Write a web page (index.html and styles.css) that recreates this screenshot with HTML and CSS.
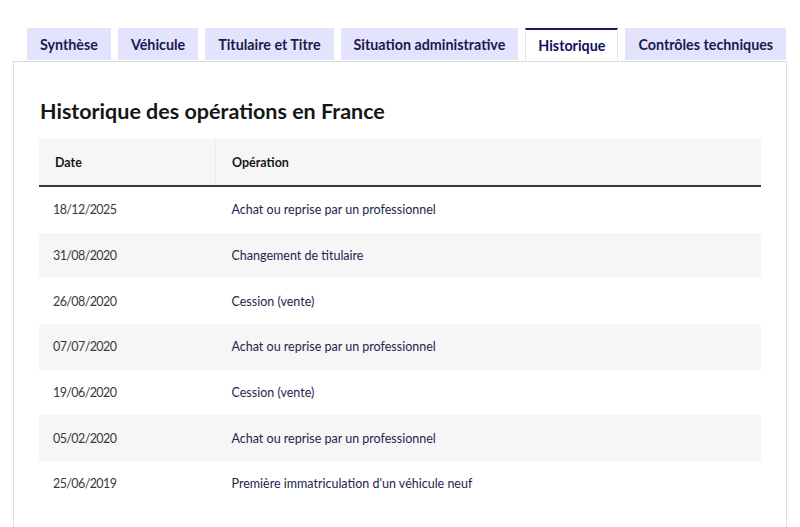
FILE: index.html
```html
<!DOCTYPE html>
<html lang="fr">
<head>
<meta charset="UTF-8">
<title>Historique du véhicule</title>
<meta name="viewport" content="width=device-width, initial-scale=1.0">
<link rel="stylesheet" href="styles.css">
</head>
<body>
<div class="tabs">
<ul class="tabs-list">
<li><button class="tab">Synthèse</button></li>
<li><button class="tab">Véhicule</button></li>
<li><button class="tab">Titulaire et Titre</button></li>
<li><button class="tab">Situation administrative</button></li>
<li><button class="tab tab-active">Historique</button></li>
<li><button class="tab">Contrôles techniques</button></li>
</ul>
<div class="panel">
<h2>Historique des opérations en France</h2>
<table class="history">
<thead>
<tr><th class="col-date">Date</th><th>Opération</th></tr>
</thead>
<tbody>
<tr><td class="col-date">18/12/2025</td><td class="op">Achat ou reprise par un professionnel</td></tr>
<tr><td class="col-date">31/08/2020</td><td class="op">Changement de titulaire</td></tr>
<tr><td class="col-date">26/08/2020</td><td class="op">Cession (vente)</td></tr>
<tr><td class="col-date">07/07/2020</td><td class="op">Achat ou reprise par un professionnel</td></tr>
<tr><td class="col-date">19/06/2020</td><td class="op">Cession (vente)</td></tr>
<tr><td class="col-date">05/02/2020</td><td class="op">Achat ou reprise par un professionnel</td></tr>
<tr><td class="col-date">25/06/2019</td><td class="op">Première immatriculation d'un véhicule neuf</td></tr>
</tbody>
</table>
</div>
</div>
</body>
</html>
```

FILE: styles.css
```css
body {
font-family: Lato, "Noto Sans", sans-serif;
margin: 0;
padding: 28px 13px 0;
background: #fff;
color: #161616;
}

.tabs-list {
display: flex;
gap: 7px;
list-style: none;
margin: 0;
padding: 0 0 0 14px;
position: relative;
z-index: 1;
}

.tabs-list li {
flex-shrink: 0;
}

.tab {
font-family: inherit;
font-size: 14.3px;
font-weight: bold;
white-space: nowrap;
color: #1a1a4e;
background: #e3e3fd;
border: none;
height: 32px;
padding: 0 13px;
margin: 0;
cursor: pointer;
}

.tab-active {
background: #fff;
color: #10105e;
border-top: 2px solid #1a1a5e;
border-left: 1px solid #e5e5e5;
border-right: 1px solid #e5e5e5;
height: 33px;
padding: 0 12px;
}

/* panneau sous les onglets */
.panel {
border: 1px solid #dddddd;
border-bottom: none;
padding: 27px 25px 40px;
}

h2 {
font-size: 21.5px;
font-weight: bold;
margin: 8px 0 14px 1px;
line-height: 28px;
}

.history {
width: 100%;
border-collapse: collapse;
font-size: 12.5px;
}

.history th {
background: #f6f6f6;
text-align: left;
font-weight: bold;
height: 46px;
padding: 0 16px;
border-bottom: 2px solid #3a3a3a;
}

.history th.col-date {
border-right: 1px solid #eeeeee;
}

.col-date {
width: 144px;
padding-left: 14px;
}

.history td {
height: 45.7px;
padding: 0 16px 0 14px;
color: #3a3a3a;
}

.history td.col-date {
letter-spacing: -0.6px;
}

.history td.op {
color: #1e1e50;
padding-left: 16px;
}

.history tbody tr:nth-child(even) td {
background: #f6f6f6;
}
```
